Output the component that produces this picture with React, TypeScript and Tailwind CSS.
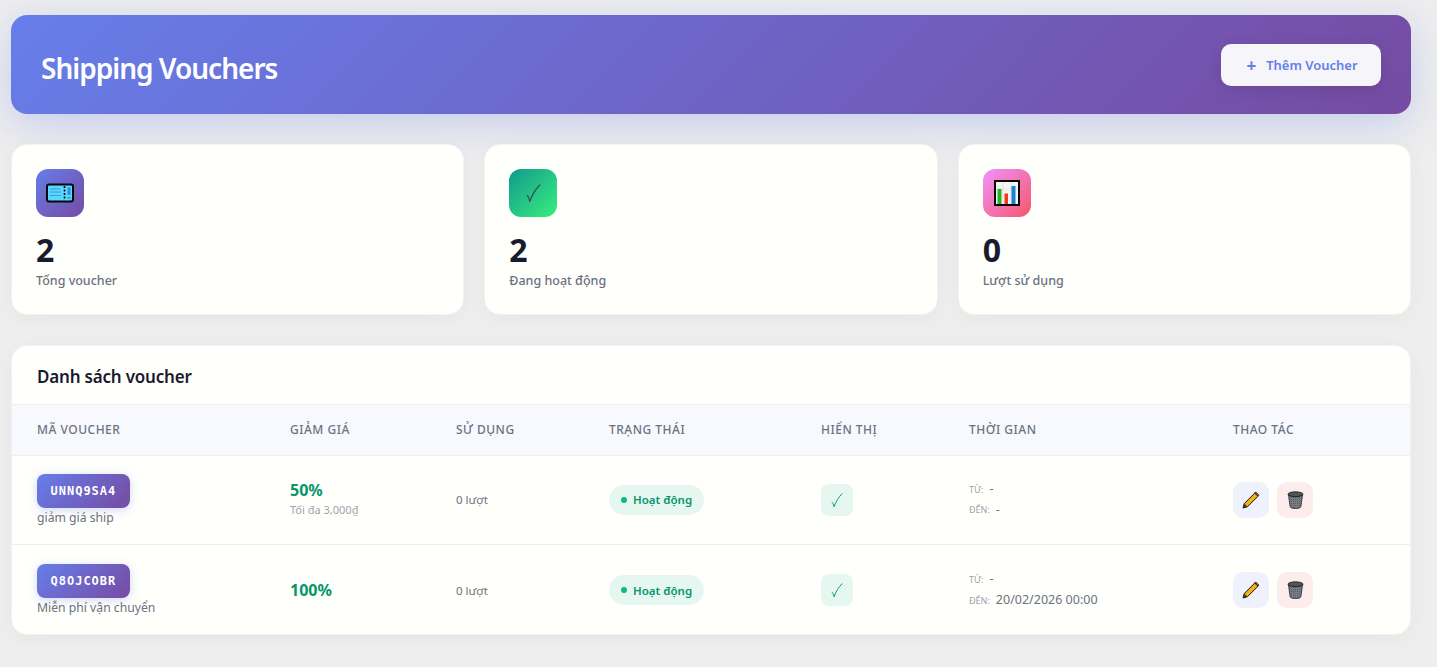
interface Voucher {
  code: string;
  desc: string;
  discount: string;
  maxOff?: string;
  from: string;
  to: string;
}

const vouchers: Voucher[] = [
  { code: "UNNQ9SA4", desc: "giảm giá ship", discount: "50%", maxOff: "Tối đa 3,000₫", from: "-", to: "-" },
  { code: "Q8OJCOBR", desc: "Miễn phí vận chuyển", discount: "100%", from: "-", to: "20/02/2026 00:00" },
];

const TicketIcon = () => (
  <svg width="28" height="20" viewBox="0 0 28 20">
    <rect x="1" y="1.500" width="26" height="17" rx="2" fill="#5ad6ff" stroke="#07070c" strokeWidth="2" />
    <path d="M4 6h10M4 9h11M4 12.500h11" stroke="#3a9be0" strokeWidth="1.200" />
    <path d="M18.500 3v14" stroke="#07070c" strokeWidth="1.600" strokeDasharray="2 1.500" />
    <rect x="21.500" y="4.500" width="3" height="7.500" fill="#2f8fd8" />
    <rect x="21.500" y="14" width="3" height="1.500" fill="#2f8fd8" />
  </svg>
);

const ChartIcon = () => (
  <svg width="26" height="26" viewBox="0 0 26 26">
    <rect x="1" y="1" width="24" height="24" fill="#f5f5f5" stroke="#050505" strokeWidth="2" />
    <path d="M9 2v22M17 2v22M2 9h22" stroke="#e2e2e2" strokeWidth="1" />
    <rect x="3.500" y="9" width="4" height="15" fill="#22b521" />
    <rect x="10.500" y="13.500" width="3.500" height="10.500" fill="#f4381a" />
    <rect x="17.500" y="6" width="4" height="18" fill="#1f7fd6" />
  </svg>
);

const PencilIcon = () => (
  <svg width="18" height="18" viewBox="0 0 18 18">
    <path d="M1 17l1.300-4.500L12.800 2l3.200 3.200L5.500 15.700z" fill="#f4b010" stroke="#17130a" strokeWidth="1" strokeLinejoin="round" />
    <path d="M12.800 2l1-1 3.200 3.200-1 1z" fill="#e2566e" stroke="#17130a" strokeWidth="0.800" />
    <path d="M1 17l1.300-4.500 3.200 3.200z" fill="#3a3532" />
  </svg>
);

const TrashIcon = ({ id }: { id: string }) => (
  <svg width="17" height="18" viewBox="0 0 17 18">
    <defs>
      <pattern id={id} width="2" height="2" patternUnits="userSpaceOnUse">
        <rect width="2" height="2" fill="#777e85" />
        <rect width="1" height="1" fill="#555b61" />
      </pattern>
    </defs>
    <path d="M1.500 4l1.600 11.500c.2 1.500 2.500 2 5.400 2s5.200-.5 5.400-2L15.500 4c-1.500 1.300-12.500 1.300-14 0z" fill={`url(#${id})`} stroke="#24272b" strokeWidth="0.800" />
    <ellipse cx="8.500" cy="3.200" rx="7.500" ry="2.400" fill="#50555b" stroke="#15171a" strokeWidth="0.800" />
  </svg>
);

const CheckMark = ({ width, height, color }: { width: number; height: number; color: string }) => (
  <svg width={width} height={height} viewBox="0 0 14 18">
    <path d="M1 11c1 .8 1.800 2.200 2.500 5.500C5.500 10.500 8.500 5.500 13 1" fill="none" stroke={color} strokeWidth="1.200" strokeLinecap="round" strokeLinejoin="round" />
  </svg>
);

const StatCard = ({ icon, bg, value, label }: { icon: React.ReactNode; bg: string; value: string; label: string }) => (
  <div className="h-[171px] rounded-2xl border border-[#f3f3f5] bg-[#fffffc] px-6 pt-6 shadow-[0_4px_20px_rgba(0,0,0,0.04)]">
    <div className={`flex h-12 w-12 items-center justify-center rounded-xl ${bg}`}>{icon}</div>
    <div className="mt-[15px] text-[32px] leading-[36px] font-bold text-[#1a1a2e]">{value}</div>
    <div className="mt-1 text-[12.500px] leading-[18px] font-medium text-[#6b7280]">{label}</div>
  </div>
);

const VoucherRow = ({ voucher, last }: { voucher: Voucher; last: boolean }) => (
  <tr className={last ? "h-[90px] [&>td]:pt-0.5" : "h-[89px] border-b border-[#eceef4] [&>td]:pt-px"}>
    <td className="px-[25px] align-middle">
      <span className="inline-block h-[34px] rounded-lg bg-[linear-gradient(135deg,#667eea,#764ba2)] px-[13.500px] font-['DejaVu_Sans_Mono',monospace] text-xs leading-[34px] font-bold tracking-[1px] text-white shadow-[0_2px_10px_rgba(102,126,234,0.3)]">
        {voucher.code}
      </span>
      <div className="text-[12.200px] leading-[19px] text-[#6b7280]">{voucher.desc}</div>
    </td>
    <td className="px-[25px] align-middle">
      <div className={`text-base leading-[22px] font-bold text-[#059669] ${voucher.maxOff ? "-mt-0.5" : ""}`}>{voucher.discount}</div>
      {voucher.maxOff && <div className="text-[11px] leading-[18px] text-[#9ca3af]">{voucher.maxOff}</div>}
    </td>
    <td className="px-[25px] align-middle text-[11.500px] text-[#6b7280]">0 lượt</td>
    <td className="px-[25px] align-middle">
      <span className="inline-flex h-[30px] items-center gap-1.5 rounded-full bg-[#e6f7f2] px-3 text-[11.500px] font-semibold text-[#059669]">
        <span className="h-1.5 w-1.5 rounded-full bg-[#10b981]" />
        Hoạt động
      </span>
    </td>
    <td className="px-[25px] align-middle">
      <div className="flex h-8 w-8 items-center justify-center rounded-lg bg-[#e6f7f2]">
        <CheckMark width={12} height={15} color="#0f9b7a" />
      </div>
    </td>
    <td className="px-[25px] align-middle">
      <div className="flex h-5 items-center gap-1.5 text-[12.500px] text-[#6b7280]">
        <span className="text-[9px] text-[#9ca3af]">TỪ:</span>
        {voucher.from}
      </div>
      <div className="flex h-[21px] items-center gap-1.5 text-[12.500px] text-[#6b7280]">
        <span className="text-[9px] text-[#9ca3af]">ĐẾN:</span>
        {voucher.to}
      </div>
    </td>
    <td className="px-[25px] align-middle">
      <div className="flex gap-2">
        <button className="flex h-9 w-9 items-center justify-center rounded-[10px] bg-[#eff2fd]">
          <PencilIcon />
        </button>
        <button className="flex h-9 w-9 items-center justify-center rounded-[10px] bg-[#fdecec]">
          <TrashIcon id={`mesh-${voucher.code}`} />
        </button>
      </div>
    </td>
  </tr>
);

const headers = ["Mã voucher", "Giảm giá", "Sử dụng", "Trạng thái", "Hiển thị", "Thời gian", "Thao tác"];

export default function App() {
  return (
    <div className="h-[667px] overflow-hidden bg-[#eeeeee] pt-[15px] pr-[26px] pl-[11px] font-['Noto_Sans',sans-serif]">
      <header className="flex h-[99px] items-center justify-between rounded-2xl bg-[linear-gradient(135deg,#667eea,#764ba2)] px-[30px] shadow-[0_10px_40px_rgba(102,126,234,0.3)]">
        <h1 className="pt-1.5 text-[28px] font-semibold tracking-[-1px] text-white">Shipping Vouchers</h1>
        <button className="flex h-[42px] w-40 items-center justify-center gap-2.5 rounded-[10px] bg-[#f5f5fa] pt-0.5 pl-0.5 text-[13px] font-semibold text-[#667eea] shadow-[0_4px_15px_rgba(0,0,0,0.1)]">
          <span className="text-[17px] leading-none font-bold">+</span>
          Thêm Voucher
        </button>
      </header>

      <div className="mt-[30px] grid grid-cols-3 gap-5">
        <StatCard icon={<TicketIcon />} bg="bg-[linear-gradient(135deg,#667eea,#764ba2)]" value="2" label="Tổng voucher" />
        <StatCard icon={<CheckMark width={15} height={19} color="#3f4a58" />} bg="bg-[linear-gradient(135deg,#11998e,#38ef7d)]" value="2" label="Đang hoạt động" />
        <StatCard icon={<ChartIcon />} bg="bg-[linear-gradient(135deg,#f093fb,#f5576c)]" value="0" label="Lượt sử dụng" />
      </div>

      <section className="mt-[30px] overflow-hidden rounded-2xl border border-[#f3f3f5] bg-[#fffffc] shadow-[0_4px_20px_rgba(0,0,0,0.04)]">
        <div className="flex h-[59px] items-center border-b border-[#eceef4] px-[25px] pt-[3px]">
          <h2 className="text-[17px] font-semibold tracking-[-0.200px] text-[#1a1a2e]">Danh sách voucher</h2>
        </div>
        <table className="w-full table-fixed border-collapse">
          <colgroup>
            <col className="w-[253px]" />
            <col className="w-[166px]" />
            <col className="w-[153px]" />
            <col className="w-[212px]" />
            <col className="w-[148px]" />
            <col className="w-[264px]" />
            <col />
          </colgroup>
          <thead>
            <tr className="h-[50px] border-b border-[#eceef4] bg-[#f8f9ff]">
              {headers.map((h) => (
                <th key={h} className="px-[25px] pt-px text-left text-xs font-medium tracking-[0.500px] text-[#6b7280] uppercase">
                  {h}
                </th>
              ))}
            </tr>
          </thead>
          <tbody>
            {vouchers.map((v, i) => (
              <VoucherRow key={v.code} voucher={v} last={i === vouchers.length - 1} />
            ))}
          </tbody>
        </table>
      </section>
    </div>
  );
}
